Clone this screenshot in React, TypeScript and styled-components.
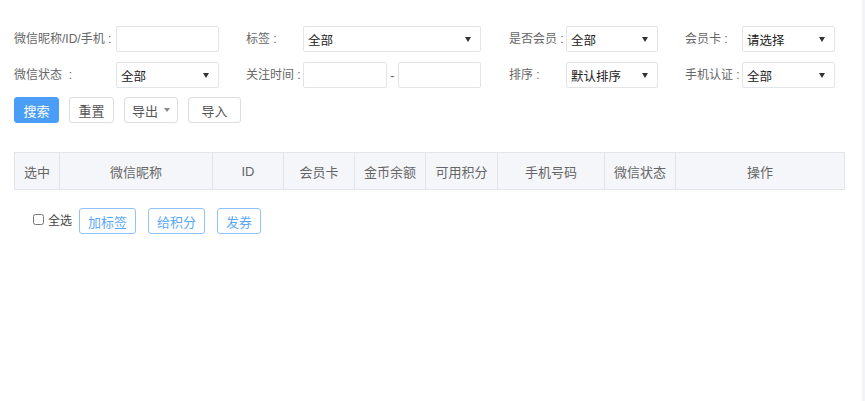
import React from "react";
import styled, { createGlobalStyle } from "styled-components";

const GlobalStyle = createGlobalStyle`
  html, body { margin: 0; padding: 0; background: #fff; }
  body {
    font-family: "Liberation Sans", "Noto Sans CJK SC", "Noto Sans", sans-serif;
    font-size: 13px;
    color: #333;
  }
  * { box-sizing: border-box; }
`;

const Page = styled.div`
  display: flex;
  min-height: 100vh;
`;

const Main = styled.main`
  flex: 1;
  padding: 26px 0 0 14px;
`;

const EdgeStrip = styled.div`
  width: 3px;
  background: #f3f4f8;
`;

const FilterGrid = styled.div`
  display: grid;
  grid-template-columns: 102px 103px 84px 178px 85px 92px 84px 93px;
  grid-auto-rows: 26px;
  row-gap: 10px;
  align-items: center;
`;

const Label = styled.label<{ $indent?: number }>`
  padding-left: ${(p) => p.$indent ?? 0}px;
  color: #666;
  font-size: 12px;
  white-space: nowrap;
  line-height: 26px;
`;

const TextInput = styled.input`
  width: 100%;
  height: 26px;
  border: 1px solid #e3e4e8;
  border-radius: 2px;
  padding: 0 6px;
  font: inherit;
  outline: none;
  background: #fff;
`;

const SelectBox = styled.div`
  position: relative;
  height: 26px;
  border: 1px solid #e3e4e8;
  border-radius: 2px;
  background: #fff;
  display: flex;
  align-items: center;
  padding-left: 4px;
  color: #222;
  font-size: 12.5px;

  &::after {
    content: "";
    position: absolute;
    right: 9px;
    top: 10px;
    border-left: 3.5px solid transparent;
    border-right: 3.5px solid transparent;
    border-top: 5px solid #333;
  }
`;

const RangeBox = styled.div`
  display: grid;
  grid-template-columns: 84px 1fr 83px;
  align-items: center;
  height: 26px;
`;

const Dash = styled.span`
  text-align: center;
  color: #666;
`;

const ActionBar = styled.div`
  display: flex;
  gap: 10px;
  margin-top: 9px;
  height: 26px;
`;

const Button = styled.button<{ $primary?: boolean; $px?: number }>`
  height: 26px;
  padding: 0 ${(p) => p.$px ?? 8.5}px;
  border: 1px solid ${(p) => (p.$primary ? "#4a9ef8" : "#dcdde2")};
  border-radius: 3px;
  background: ${(p) => (p.$primary ? "#4a9ef8" : "#fff")};
  color: ${(p) => (p.$primary ? "#fff" : "#555")};
  font: inherit;
  font-size: 13px;
  display: inline-flex;
  align-items: center;
  gap: 6px;
  cursor: pointer;
`;

const Caret = styled.span`
  width: 0;
  height: 0;
  border-left: 3.5px solid transparent;
  border-right: 3.5px solid transparent;
  border-top: 4px solid #888;
`;

const Table = styled.table`
  margin-top: 29px;
  width: 830px;
  border-collapse: collapse;
  table-layout: fixed;
`;

const Th = styled.th`
  height: 37px;
  padding: 0;
  background: #f5f6fa;
  border: 1px solid #e3e5ec;
  color: #666;
  font-weight: normal;
  font-size: 13px;
  text-align: center;
`;

const BulkBar = styled.div`
  display: flex;
  align-items: center;
  margin-top: 18px;
  padding-left: 19px;
  height: 26px;
`;

const CheckLabel = styled.label`
  display: flex;
  align-items: center;
  gap: 4px;
  color: #444;
  font-size: 12px;
  margin-right: 7px;
  margin-top: -4px;
`;

const Check = styled.input`
  width: 11px;
  height: 11px;
  margin: 0;
`;

const BulkButtons = styled.div`
  display: flex;
  gap: 12px;
`;

const OutlineButton = styled.button`
  height: 26px;
  padding: 0 8px;
  border: 1px solid #8ec3fb;
  border-radius: 3px;
  background: #fff;
  color: #5aa8f8;
  font: inherit;
  font-size: 13px;
  cursor: pointer;
`;

const columns: { title: string; width: number }[] = [
  { title: "选中", width: 45 },
  { title: "微信昵称", width: 153 },
  { title: "ID", width: 71 },
  { title: "会员卡", width: 71 },
  { title: "金币余额", width: 71 },
  { title: "可用积分", width: 72 },
  { title: "手机号码", width: 107 },
  { title: "微信状态", width: 71 },
  { title: "操作", width: 169 },
];

export default function App() {
  return (
    <Page>
      <GlobalStyle />
      <Main>
        <FilterGrid>
          <Label>微信昵称/ID/手机 :</Label>
          <TextInput />
          <Label $indent={27}>标签 :</Label>
          <SelectBox>全部</SelectBox>
          <Label $indent={28}>是否会员 :</Label>
          <SelectBox>全部</SelectBox>
          <Label $indent={27}>会员卡 :</Label>
          <SelectBox>请选择</SelectBox>

          <Label>微信状态 &nbsp;:</Label>
          <SelectBox>全部</SelectBox>
          <Label $indent={27}>关注时间 :</Label>
          <RangeBox>
            <TextInput />
            <Dash>-</Dash>
            <TextInput />
          </RangeBox>
          <Label $indent={28}>排序 :</Label>
          <SelectBox>默认排序</SelectBox>
          <Label $indent={27}>手机认证 :</Label>
          <SelectBox>全部</SelectBox>
        </FilterGrid>

        <ActionBar>
          <Button $primary>搜索</Button>
          <Button>重置</Button>
          <Button $px={7}>
            导出
            <Caret />
          </Button>
          <Button $px={12.5}>导入</Button>
        </ActionBar>

        <Table>
          <colgroup>
            {columns.map((c) => (
              <col key={c.title} style={{ width: c.width }} />
            ))}
          </colgroup>
          <thead>
            <tr>
              {columns.map((c) => (
                <Th key={c.title}>{c.title}</Th>
              ))}
            </tr>
          </thead>
        </Table>

        <BulkBar>
          <CheckLabel>
            <Check type="checkbox" />
            全选
          </CheckLabel>
          <BulkButtons>
            <OutlineButton>加标签</OutlineButton>
            <OutlineButton>给积分</OutlineButton>
            <OutlineButton>发券</OutlineButton>
          </BulkButtons>
        </BulkBar>
      </Main>
      <EdgeStrip />
    </Page>
  );
}
